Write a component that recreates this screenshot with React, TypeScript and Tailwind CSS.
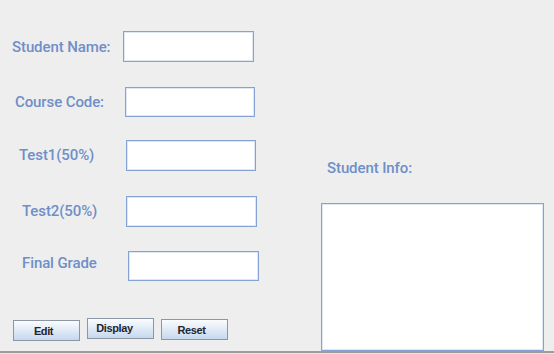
import React from "react";

const labelCls =
  "text-[15px] leading-[20px] text-[#6f8fc8] font-medium tracking-[-0.1px] whitespace-nowrap";
const fieldCls =
  "bg-white border border-[#86a2d2] shadow-[inset_0_0_0_1px_#dfe7f4]";
const btnCls =
  "w-[67px] h-[21px] border border-[#8c97a6] bg-gradient-to-b from-[#fbfcfe] to-[#c6d8ee] text-[11px] tracking-[-0.4px] font-bold text-[#1f2530] flex items-center justify-center pr-[6px]";

export default function App() {
  return (
    <div
      className="w-[554px] h-[354px] bg-[#eeeeee] flex flex-col overflow-hidden"
      style={{ fontFamily: 'Roboto, "Noto Sans", sans-serif' }}
    >
      <div className="flex h-[351px]">
        {/* Left column */}
        <div className="w-[321px] flex flex-col">
          <div className="flex items-start mt-[31px]">
            <div className={`${labelCls} ml-[12px] mt-[6px] w-[111px]`}>Student Name:</div>
            <div className={`${fieldCls} w-[131px] h-[31px]`} />
          </div>
          <div className="flex items-start mt-[25px]">
            <div className={`${labelCls} ml-[15px] mt-[5px] w-[110px]`}>Course Code:</div>
            <div className={`${fieldCls} w-[130px] h-[30px]`} />
          </div>
          <div className="flex items-start mt-[23px]">
            <div className={`${labelCls} ml-[19px] mt-[5px] w-[107px]`}>Test1(50%)</div>
            <div className={`${fieldCls} w-[130px] h-[31px]`} />
          </div>
          <div className="flex items-start mt-[25px]">
            <div className={`${labelCls} ml-[22px] mt-[5px] w-[104px]`}>Test2(50%)</div>
            <div className={`${fieldCls} w-[131px] h-[31px]`} />
          </div>
          <div className="flex items-start mt-[24px]">
            <div className={`${labelCls} ml-[22px] mt-[2px] w-[106px]`}>Final Grade</div>
            <div className={`${fieldCls} w-[131px] h-[30px]`} />
          </div>
          <div
            className="flex items-start mt-[37px]"
            style={{ fontFamily: '"Liberation Sans", Arial, sans-serif' }}
          >
            <div className={`${btnCls} ml-[13px] mt-[2px] pt-[2px]`}>Edit</div>
            <div className={`${btnCls} ml-[7px] pr-[12px]`}>Display</div>
            <div className={`${btnCls} ml-[7px] mt-[1px] pt-[2px]`}>Reset</div>
          </div>
        </div>
        {/* Right column */}
        <div className="flex flex-col">
          <div className={`${labelCls} ml-[6px] mt-[158px]`}>Student Info:</div>
          <div className={`${fieldCls} w-[223px] flex-1 mt-[25px]`} />
        </div>
      </div>
      <div className="h-[2px] bg-[#9d9d9d]" />
      <div className="h-[1px] bg-[#e4e4e4]" />
    </div>
  );
}
